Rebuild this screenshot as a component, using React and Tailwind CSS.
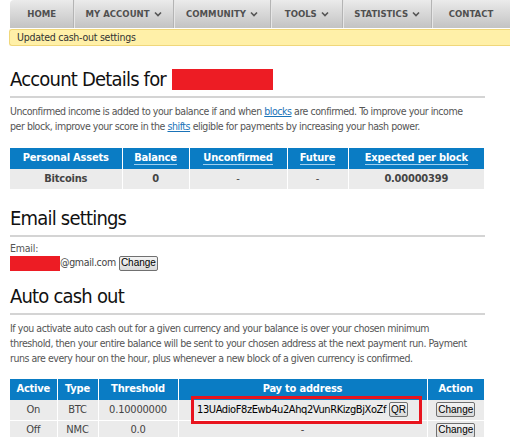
import React from "react";

const font = { fontFamily: '"DejaVu Sans Condensed", "DejaVu Sans", sans-serif' };

function Chevron() {
  return (
    <svg width="8" height="6" viewBox="0 0 8 6" className="ml-[4px] inline-block">
      <path d="M1 1.5 L4 4.5 L7 1.5" fill="none" stroke="#555" strokeWidth="1.6" />
    </svg>
  );
}

function NavItem({ w, label, chev, last }) {
  return (
    <div
      className={`flex h-full items-center justify-center text-[9.5px] font-bold text-[#505050] ${last ? "" : "border-r border-r-[#b4b4b4] shadow-[1px_0_0_#e6e6e6]"}`}
      style={{ width: w }}
    >
      <span>{label}</span>
      {chev && <Chevron />}
    </div>
  );
}

function Btn({ children }) {
  return (
    <span
      className="inline-flex h-[15px] items-center rounded-[2px] border border-[#707070] bg-gradient-to-b from-[#f4f4f4] to-[#dadada] px-[1px] align-middle text-[10px] leading-none tracking-normal text-black"
      style={{ fontFamily: '"Liberation Sans", Arial, sans-serif' }}
    >
      {children}
    </span>
  );
}

function Heading({ children }) {
  return (
    <div className="border-b-2 border-b-[#d4d4d4] pb-[4px] text-[20px] leading-[26px] tracking-[-0.8px] text-[#111]">
      {children}
    </div>
  );
}

function HLink({ children }) {
  return <span className="border-b border-b-[#9fd0f0]">{children}</span>;
}

const para = "whitespace-nowrap text-[10.5px] leading-[15px] tracking-[-0.45px] text-[#555]";

export default function App() {
  return (
    <div className="h-[437px] w-[510px] overflow-hidden bg-white" style={font}>
      <div className="ml-[10px] flex h-[28px] rounded-tl-[4px] bg-gradient-to-b from-[#ebebeb] to-[#c3c3c3]">
        <NavItem w={66} label="HOME" />
        <NavItem w={102} label="MY ACCOUNT" chev />
        <NavItem w={100} label="COMMUNITY" chev />
        <NavItem w={74} label="TOOLS" chev />
        <NavItem w={91} label="STATISTICS" chev />
        <NavItem w={80} label="CONTACT" last />
      </div>
      <div className="ml-[9px] mt-[1px] flex h-[17px] items-center rounded-l-[3px] border border-r-0 border-[#f0d77a] bg-[#fff0a8] pl-[7px] text-[10.5px] tracking-[-0.25px] text-[#333]">
        Updated cash-out settings
      </div>

      <div className="ml-[10px] w-[475px]">
        <div className="mt-[20px]">
          <Heading>
            <span className="flex items-center">
              Account Details for
              <span className="ml-[6px] inline-block h-[21px] w-[101px] bg-[#ed1c24]" />
            </span>
          </Heading>
        </div>
        <p className={`mt-[6px] ${para}`}>
          Unconfirmed income is added to your balance if and when{" "}
          <span className="text-[#1a73b8] underline">blocks</span> are confirmed. To improve your income
          <br />
          per block, improve your score in the <span className="text-[#1a73b8] underline">shifts</span> eligible for
          payments by increasing your hash power.
        </p>

        <table className="mt-[14px] w-[474px] border-collapse text-[11px] tracking-[-0.2px]">
          <thead>
            <tr className="h-[21px] bg-[#0a7cc4] font-bold text-white">
              <th className="w-[112px] border-r border-white font-bold">Personal Assets</th>
              <th className="w-[67px] border-r border-white font-bold"><HLink>Balance</HLink></th>
              <th className="w-[98px] border-r border-white font-bold"><HLink>Unconfirmed</HLink></th>
              <th className="w-[61px] border-r border-white font-bold"><HLink>Future</HLink></th>
              <th className="font-bold"><HLink>Expected per block</HLink></th>
            </tr>
          </thead>
          <tbody>
            <tr className="h-[20px] bg-[#ebebeb] text-center font-bold text-[#444]">
              <td className="border-r border-white">Bitcoins</td>
              <td className="border-r border-white">0</td>
              <td className="border-r border-white font-normal">-</td>
              <td className="border-r border-white font-normal">-</td>
              <td>0.00000399</td>
            </tr>
          </tbody>
        </table>

        <div className="mt-[16px]">
          <Heading>Email settings</Heading>
        </div>
        <div className="mt-[4px] text-[10.5px] leading-[14px] tracking-[-0.2px] text-[#555]">Email:</div>
        <div className="flex h-[16px] items-center text-[10.5px] tracking-[-0.3px] text-[#444]">
          <span className="inline-block h-[15px] w-[50px] bg-[#ed1c24]" />
          <span>@gmail.com</span>
          <span className="ml-[3px] flex"><Btn>Change</Btn></span>
        </div>

        <div className="mt-[12px]">
          <Heading>Auto cash out</Heading>
        </div>
        <p className={`mt-[6px] ${para}`}>
          If you activate auto cash out for a given currency and your balance is over your chosen minimum
          <br />
          threshold, then your entire balance will be sent to your chosen address at the next payment run. Payment
          <br />
          runs are every hour on the hour, plus whenever a new block of a given currency is confirmed.
        </p>

        <table className="mt-[13px] w-[474px] border-collapse text-[11px] tracking-[-0.2px]">
          <thead>
            <tr className="h-[21px] bg-[#0a7cc4] text-white">
              <th className="w-[47px] border-r border-white font-bold">Active</th>
              <th className="w-[41px] border-r border-white font-bold">Type</th>
              <th className="w-[80px] border-r border-white font-bold">Threshold</th>
              <th className="w-[249px] border-r border-white font-bold">Pay to address</th>
              <th className="font-bold">Action</th>
            </tr>
          </thead>
          <tbody className="text-center text-[#444]">
            <tr className="h-[20px] bg-[#ebebeb]">
              <td className="border-r border-b border-white">On</td>
              <td className="border-r border-b border-white">BTC</td>
              <td className="border-r border-b border-white">0.10000000</td>
              <td className="relative border-r border-b border-white">
                <div className="absolute left-[12px] top-[-4px] h-[28px] w-[231px] border-[3px] border-[#e8141e]" />
                <span className="tracking-[-0.4px] text-black">13UAdioF8zEwb4u2Ahq2VunRKizgBjXoZf</span>{" "}
                <Btn>QR</Btn>
              </td>
              <td className="border-b border-white"><Btn>Change</Btn></td>
            </tr>
            <tr className="h-[20px] bg-[#ebebeb]">
              <td className="border-r border-white">Off</td>
              <td className="border-r border-white">NMC</td>
              <td className="border-r border-white">0.0</td>
              <td className="border-r border-white">-</td>
              <td><Btn>Change</Btn></td>
            </tr>
          </tbody>
        </table>
      </div>
    </div>
  );
}
